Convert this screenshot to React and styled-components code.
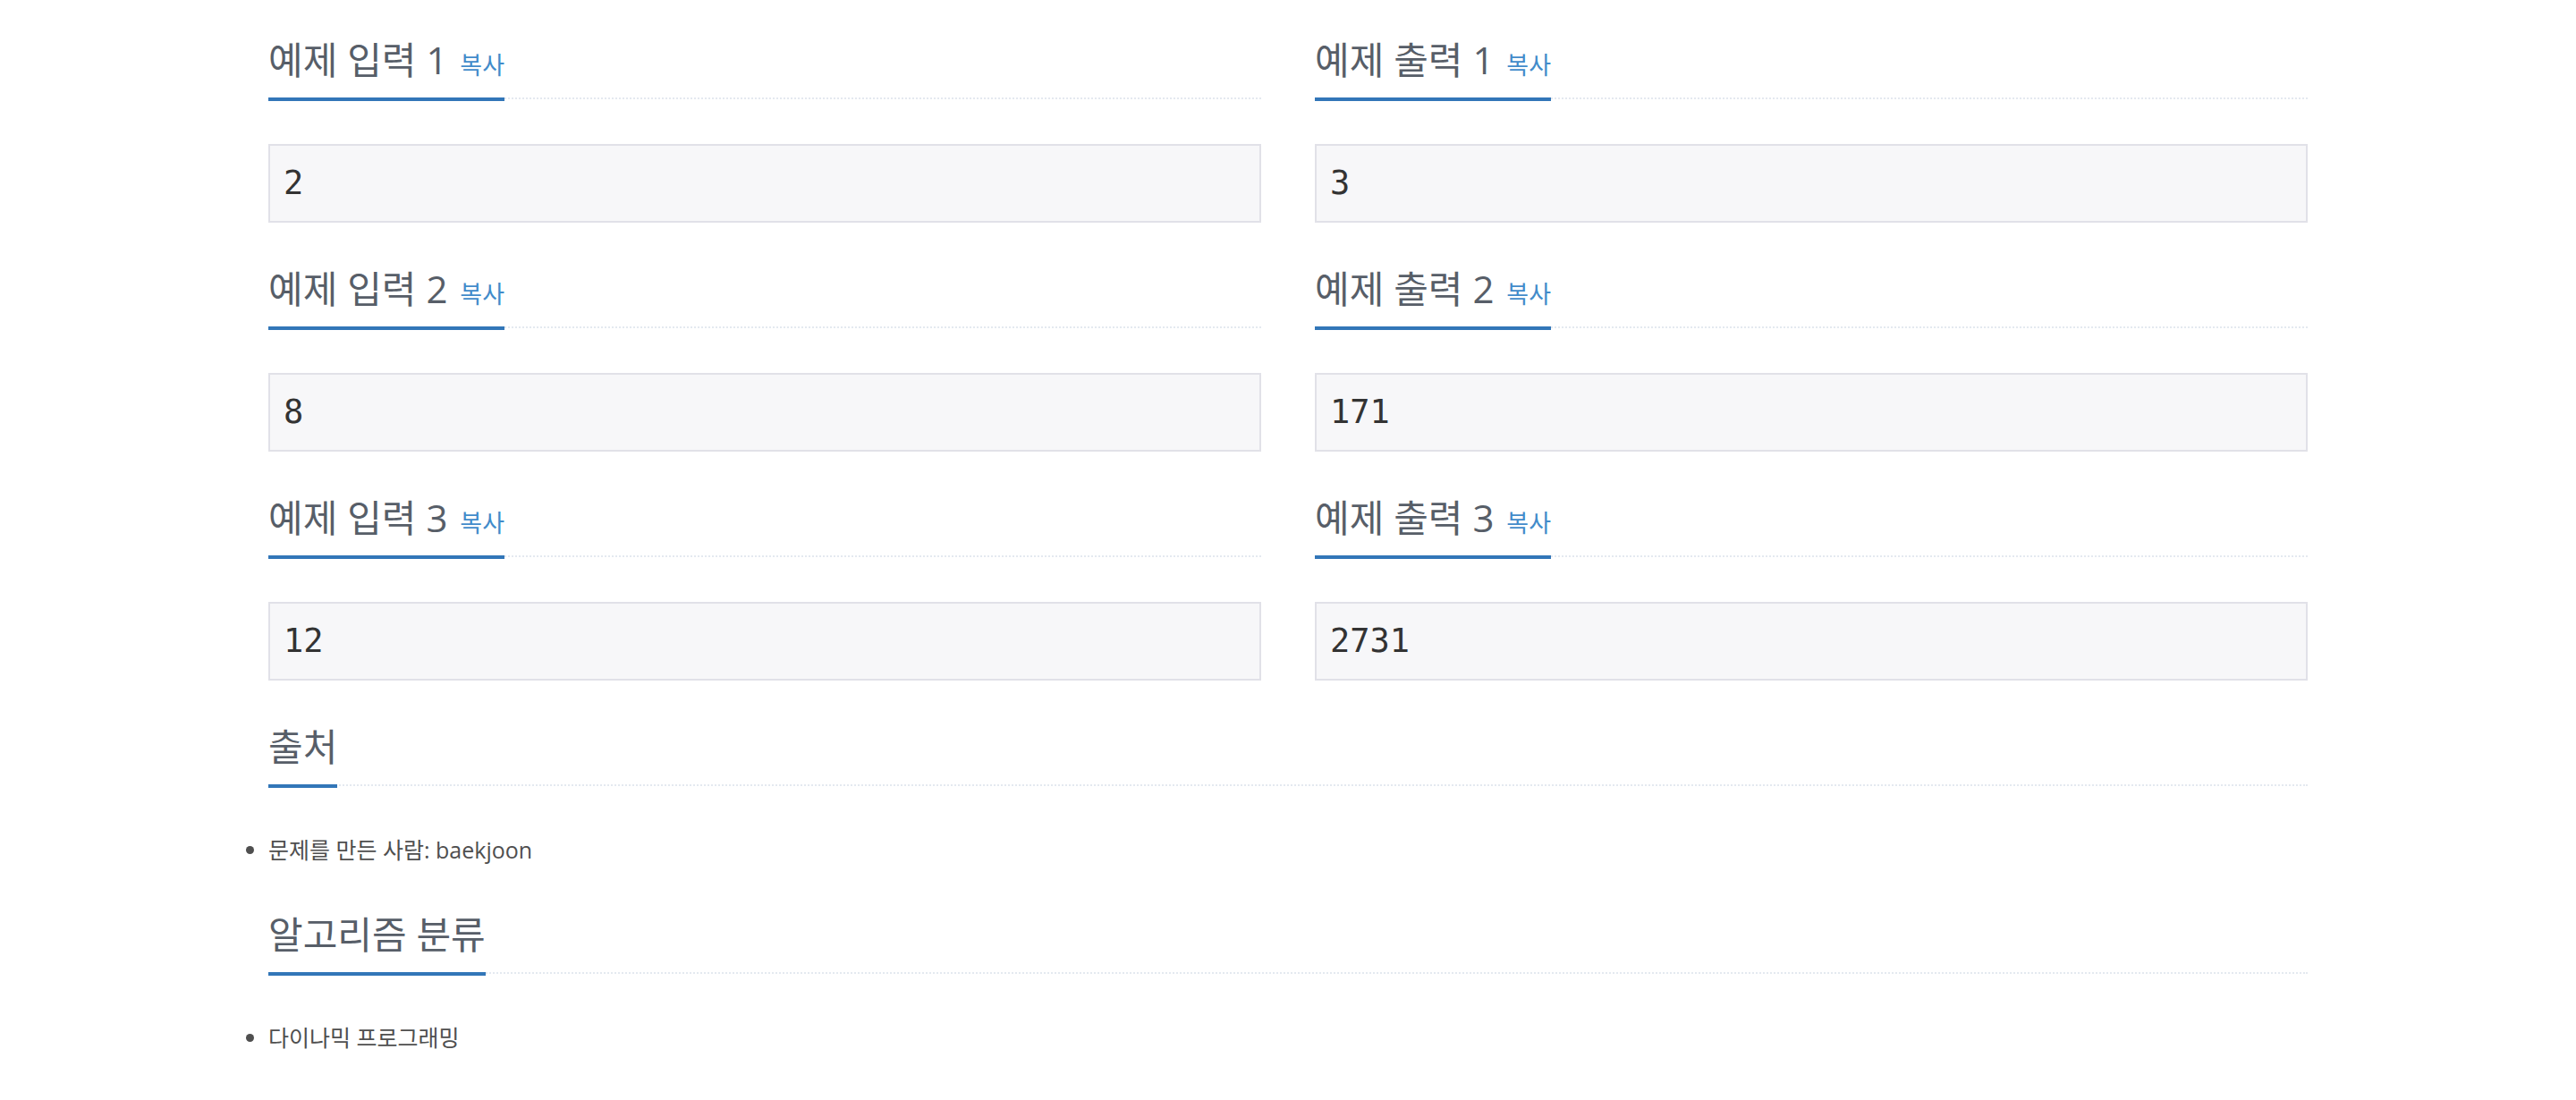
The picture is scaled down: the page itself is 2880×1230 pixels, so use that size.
import React from "react";
import styled, { createGlobalStyle } from "styled-components";

const GlobalStyle = createGlobalStyle`
  html, body {
    margin: 0;
    padding: 0;
    background: #ffffff;
  }
  body {
    font-family: "Open Sans", "Noto Sans CJK KR", sans-serif;
    color: #333333;
  }
`;

const Page = styled.main`
  width: 2280px;
  margin: 0 auto;
  padding-top: 43px;
  display: flex;
  flex-direction: column;
  gap: 50px;
`;

const SampleGrid = styled.div`
  display: grid;
  grid-template-columns: 1fr 1fr;
  column-gap: 60px;
  row-gap: 50px;
`;

const Section = styled.section`
  display: flex;
  flex-direction: column;
  gap: 50px;
`;

const Headline = styled.div`
  display: flex;
  align-items: flex-start;
  border-bottom: 2px dotted #e4e9f0;
`;

const Title = styled.h2`
  margin: 0 0 -4px 0;
  padding: 0 0 18px 0;
  font-size: 42px;
  line-height: 48px;
  font-weight: 400;
  color: #575e68;
  border-bottom: 4px solid #3276b8;
  white-space: nowrap;
`;

const CopyButton = styled.button`
  margin: 0 0 0 3px;
  padding: 0;
  border: 0;
  background: none;
  font-family: inherit;
  font-size: 27px;
  line-height: 28px;
  vertical-align: baseline;
  color: #428bca;
  cursor: pointer;
`;

const SampleData = styled.pre`
  margin: 0;
  padding: 19px 15px;
  border: 2px solid #e1e1e8;
  background: #f7f7f9;
  font-family: "DejaVu Sans Mono", monospace;
  font-size: 37px;
  line-height: 46px;
  color: #333333;
`;

const List = styled.ul`
  margin: 0;
  padding: 0;
  list-style: disc outside;
`;

const Item = styled.li`
  font-size: 25px;
  line-height: 42px;
  color: #4f4f4f;
`;

const samples = [
  { input: "2", output: "3" },
  { input: "8", output: "171" },
  { input: "12", output: "2731" },
];

function Sample({ title, data }) {
  return (
    <Section>
      <Headline>
        <Title>
          {title} <CopyButton type="button">복사</CopyButton>
        </Title>
      </Headline>
      <SampleData>{data}</SampleData>
    </Section>
  );
}

function InfoSection({ title, items }) {
  return (
    <Section>
      <Headline>
        <Title>{title}</Title>
      </Headline>
      <List>
        {items.map((it) => (
          <Item key={it}>{it}</Item>
        ))}
      </List>
    </Section>
  );
}

export default function App() {
  return (
    <>
      <GlobalStyle />
      <Page>
        <SampleGrid>
          {samples.map((s, i) => (
            <React.Fragment key={i}>
              <Sample title={`예제 입력 ${i + 1}`} data={s.input} />
              <Sample title={`예제 출력 ${i + 1}`} data={s.output} />
            </React.Fragment>
          ))}
        </SampleGrid>
        <InfoSection title="출처" items={["문제를 만든 사람: baekjoon"]} />
        <InfoSection title="알고리즘 분류" items={["다이나믹 프로그래밍"]} />
      </Page>
    </>
  );
}
